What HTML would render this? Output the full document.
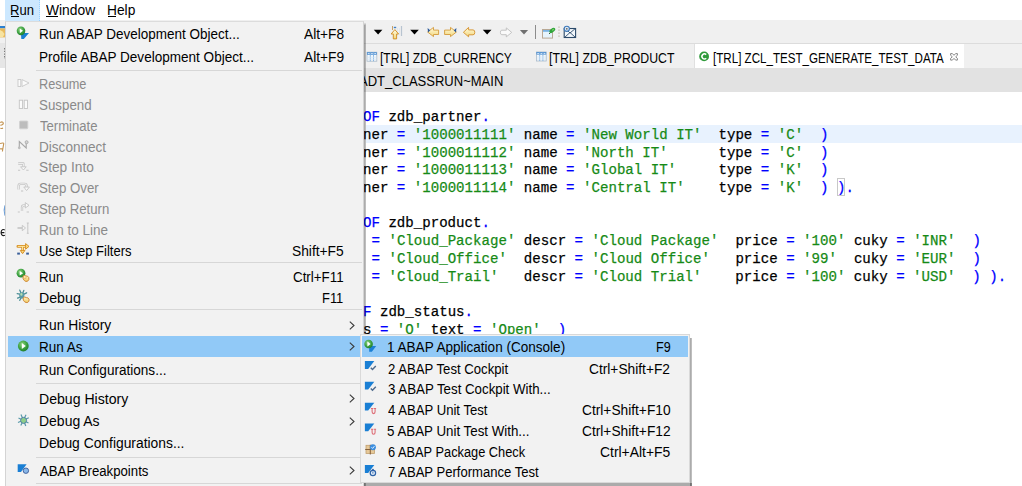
<!DOCTYPE html>
<html><head><meta charset="utf-8"><style>
html,body{margin:0;padding:0;}
body{width:1022px;height:486px;overflow:hidden;position:relative;background:#fff;font-family:'Liberation Sans',sans-serif;}
div{box-sizing:border-box;}
.code{position:absolute;font-family:"Liberation Mono",monospace;white-space:pre;color:#000;-webkit-text-stroke:0.25px currentColor;}
.k{color:#0000ff}.s{color:#168a16}
</style></head><body>
<div style="position:absolute;left:0px;top:0px;width:1022px;height:20px;background:#ffffff;"></div>
<div style="position:absolute;left:0px;top:20px;width:1022px;height:23px;background:#f0f0f0;"></div>
<div style="position:absolute;left:0px;top:43px;width:1022px;height:1px;background:#dcdcdc;"></div>
<div style="position:absolute;left:0px;top:44px;width:1022px;height:24px;background:#f0f0f0;"></div>
<div style="position:absolute;left:5px;top:68px;width:1017px;height:24px;background:#e2e2e2;"></div>
<div style="position:absolute;left:0px;top:43px;width:5px;height:25px;background:#e6e6e6;"></div>
<div style="position:absolute;left:694px;top:44px;width:270px;height:24px;background:#ffffff;border-left:1px solid #e0e0e0;"></div>
<div style="position:absolute;left:380.14px;top:48.95px;font-size:14.0px;line-height:18px;color:#000;white-space:pre;transform-origin:0 0;transform:scaleX(0.8605);">[TRL] ZDB_CURRENCY</div>
<div style="position:absolute;left:549.12px;top:48.95px;font-size:14.0px;line-height:18px;color:#000;white-space:pre;transform-origin:0 0;transform:scaleX(0.8761);">[TRL] ZDB_PRODUCT</div>
<div style="position:absolute;left:712.67px;top:48.95px;font-size:14.0px;line-height:18px;color:#000;white-space:pre;transform-origin:0 0;transform:scaleX(0.8284);">[TRL] ZCL_TEST_GENERATE_TEST_DATA</div>
<div style="position:absolute;left:359.00px;top:72.15px;font-size:14.0px;line-height:18px;color:#000;white-space:pre;transform-origin:0 0;transform:scaleX(0.9299);">ADT_CLASSRUN~MAIN</div>
<div style="position:absolute;left:366px;top:125.4px;width:656px;height:17.3px;background:#e8f2fe;"></div>
<div class="code" style="left:363.3px;top:109.22px;font-size:15.5px;line-height:17.7px;transform-origin:0 0;transform:scaleX(0.9097);"><span class="k">OF</span> zdb_partner<span class="k">.</span></div>
<div class="code" style="left:363.3px;top:126.92px;font-size:15.5px;line-height:17.7px;transform-origin:0 0;transform:scaleX(0.9097);">ner <span class="k">=</span> <span class="s">&#x27;1000011111&#x27;</span> name <span class="k">=</span> <span class="s">&#x27;New World IT&#x27;</span>  type <span class="k">=</span> <span class="s">&#x27;C&#x27;</span>  <span class="k">)</span></div>
<div class="code" style="left:363.3px;top:144.62px;font-size:15.5px;line-height:17.7px;transform-origin:0 0;transform:scaleX(0.9097);">ner <span class="k">=</span> <span class="s">&#x27;1000011112&#x27;</span> name <span class="k">=</span> <span class="s">&#x27;North IT&#x27;</span>      type <span class="k">=</span> <span class="s">&#x27;C&#x27;</span>  <span class="k">)</span></div>
<div class="code" style="left:363.3px;top:162.32px;font-size:15.5px;line-height:17.7px;transform-origin:0 0;transform:scaleX(0.9097);">ner <span class="k">=</span> <span class="s">&#x27;1000011113&#x27;</span> name <span class="k">=</span> <span class="s">&#x27;Global IT&#x27;</span>     type <span class="k">=</span> <span class="s">&#x27;K&#x27;</span>  <span class="k">)</span></div>
<div class="code" style="left:363.3px;top:180.02px;font-size:15.5px;line-height:17.7px;transform-origin:0 0;transform:scaleX(0.9097);">ner <span class="k">=</span> <span class="s">&#x27;1000011114&#x27;</span> name <span class="k">=</span> <span class="s">&#x27;Central IT&#x27;</span>    type <span class="k">=</span> <span class="s">&#x27;K&#x27;</span>  <span class="k">)</span> <span class="k">)</span><span class="k">.</span></div>
<div class="code" style="left:363.3px;top:215.42px;font-size:15.5px;line-height:17.7px;transform-origin:0 0;transform:scaleX(0.9097);"><span class="k">OF</span> zdb_product<span class="k">.</span></div>
<div class="code" style="left:363.3px;top:233.12px;font-size:15.5px;line-height:17.7px;transform-origin:0 0;transform:scaleX(0.9097);"> <span class="k">=</span> <span class="s">&#x27;Cloud_Package&#x27;</span> descr <span class="k">=</span> <span class="s">&#x27;Cloud Package&#x27;</span>  price <span class="k">=</span> <span class="s">&#x27;100&#x27;</span> cuky <span class="k">=</span> <span class="s">&#x27;INR&#x27;</span>  <span class="k">)</span></div>
<div class="code" style="left:363.3px;top:250.82px;font-size:15.5px;line-height:17.7px;transform-origin:0 0;transform:scaleX(0.9097);"> <span class="k">=</span> <span class="s">&#x27;Cloud_Office&#x27;</span>  descr <span class="k">=</span> <span class="s">&#x27;Cloud Office&#x27;</span>   price <span class="k">=</span> <span class="s">&#x27;99&#x27;</span>  cuky <span class="k">=</span> <span class="s">&#x27;EUR&#x27;</span>  <span class="k">)</span></div>
<div class="code" style="left:363.3px;top:268.52px;font-size:15.5px;line-height:17.7px;transform-origin:0 0;transform:scaleX(0.9097);"> <span class="k">=</span> <span class="s">&#x27;Cloud_Trail&#x27;</span>   descr <span class="k">=</span> <span class="s">&#x27;Cloud Trial&#x27;</span>    price <span class="k">=</span> <span class="s">&#x27;100&#x27;</span> cuky <span class="k">=</span> <span class="s">&#x27;USD&#x27;</span>  <span class="k">)</span> <span class="k">)</span><span class="k">.</span></div>
<div class="code" style="left:363.3px;top:303.92px;font-size:15.5px;line-height:17.7px;transform-origin:0 0;transform:scaleX(0.9097);"><span class="k">F</span> zdb_status<span class="k">.</span></div>
<div class="code" style="left:363.3px;top:321.62px;font-size:15.5px;line-height:17.7px;transform-origin:0 0;transform:scaleX(0.9097);">s <span class="k">=</span> <span class="s">&#x27;O&#x27;</span> text <span class="k">=</span> <span class="s">&#x27;Open&#x27;</span>  <span class="k">)</span></div>
<div style="position:absolute;left:836.6px;top:178.2px;width:8.4px;height:17.4px;background:transparent;border:1px solid #c8c8c8;"></div>
<div style="position:absolute;left:5px;top:0px;width:35px;height:20.5px;background:#cce8ff;border-right:1px dotted #99d1ff;"></div>
<div style="position:absolute;left:10.27px;top:1.25px;font-size:14.0px;line-height:18px;color:#000;white-space:pre;transform-origin:0 0;transform:scaleX(0.9333);">Run</div>
<div style="position:absolute;left:45.90px;top:1.25px;font-size:14.0px;line-height:18px;color:#000;white-space:pre;transform-origin:0 0;transform:scaleX(0.9860);">Window</div>
<div style="position:absolute;left:106.52px;top:1.25px;font-size:14.0px;line-height:18px;color:#000;white-space:pre;transform-origin:0 0;transform:scaleX(0.9821);">Help</div>
<div style="position:absolute;left:11px;top:16px;width:8px;height:1px;background:#000;"></div>
<div style="position:absolute;left:46px;top:16px;width:12px;height:1px;background:#000;"></div>
<div style="position:absolute;left:108px;top:16px;width:8px;height:1px;background:#000;"></div>
<svg style="position:absolute;left:0;top:0" width="1022" height="486" viewBox="0 0 1022 486">
<defs>
 <linearGradient id="yel" x1="0" y1="0" x2="0" y2="1"><stop offset="0" stop-color="#fffbe0"/><stop offset="1" stop-color="#f3d77a"/></linearGradient>
</defs>
<!-- left strip -->
<rect x="0" y="26" width="5" height="2.4" fill="#2a7fd0"/>
<path d="M0 28.4 H5 V37.4 H0 Z" fill="#e9b95a"/>
<path d="M0 30 Q3 31 4.5 34 L3 37 H0 Z" fill="#f7e3a0"/>

<path d="M4.6 48 V59" stroke="#777" stroke-width="1.1" stroke-dasharray="1.4 1.3"/>
<path d="M0.2 122.5 Q2.8 121 3.3 123.2 Q3.4 125 0.3 125.2 M0.4 128.3 Q1.8 128.8 3 128" fill="none" stroke="#c39350" stroke-width="1.1"/>
<path d="M3.8 143.2 L2.4 151.5 M0 143.6 Q2.4 142.6 3.8 143.2 M0 148.8 Q1.5 149 2.8 148.4" fill="none" stroke="#c39350" stroke-width="1.1"/>
<path d="M5 205.5 Q3.4 210.5 5 215.5" fill="none" stroke="#6f9fd6" stroke-width="1.3"/>
<path d="M4.8 230 Q3 228.8 1.6 230.5 Q0.6 232.5 1.6 234.6 Q3 236.2 4.9 235.2 M1.2 232.6 H4.4" fill="none" stroke="#1a1a1a" stroke-width="1.1"/>
<!-- dropdown arrows -->
<path d="M373.8 29.8 H382.4 L378.1 34.5 Z" fill="#000"/>
<path d="M410.2 29.8 H418.8 L414.5 34.5 Z" fill="#000"/>
<path d="M482.8 29.8 H491.5 L487.15 34.4 Z" fill="#000"/>
<path d="M519.9 30 H528.1 L524 34.5 Z" fill="#707070"/>
<!-- up arrow icon -->
<path d="M392.5 26 V30" stroke="#c9a36a" stroke-width="1"/>
<path d="M401.5 26 V36" stroke="#b8c4d0" stroke-width="1.2"/>
<rect x="393.8" y="26.8" width="2.4" height="1.4" fill="#3f7fc4"/>
<path d="M397.5 28.5 V36 M399.5 28.5 V35" stroke="#cfe0f0" stroke-width="1" stroke-dasharray="1 1"/>
<path d="M394.9 29.6 L398.6 34 H396.6 V38.9 H393.3 V34 H391.1 Z" fill="url(#yel)" stroke="#d08a20" stroke-width="0.9"/>
<!-- back arrow with blue -->
<path d="M427.6 32 L433.5 27.4 V30.1 H438.6 V34.5 H433.5 V36.6 Z" fill="url(#yel)" stroke="#d49a3a" stroke-width="0.9" stroke-linejoin="round"/>
<path d="M427.6 28 L430.2 30.2 L428 32.5 Z" fill="#2b5a9a"/>
<!-- forward arrow with blue -->
<path d="M456.4 32 L450.5 27.4 V30.1 H444.6 V34.5 H450.5 V36.6 Z" fill="url(#yel)" stroke="#d49a3a" stroke-width="0.9" stroke-linejoin="round"/>
<path d="M456.4 28 L453.8 30.2 L456 32.5 Z" fill="#2b5a9a"/>
<!-- orange back arrow -->
<path d="M463.4 32.3 L468.6 27.4 V29.9 H473 Q474.8 29.9 474.8 32.3 Q474.8 34.8 473 34.8 H468.6 V36.8 Z" fill="url(#yel)" stroke="#d8993a" stroke-width="1" stroke-linejoin="round"/>
<!-- disabled forward arrow -->
<path d="M511.7 32.4 L506.3 27.9 V30.2 H501.8 Q500.4 30.2 500.4 32.4 Q500.4 34.7 501.8 34.7 H506.3 V36.9 Z" fill="#fafafa" stroke="#bdbdbd" stroke-width="0.9" stroke-linejoin="round"/>
<!-- separator -->
<rect x="535" y="25" width="1" height="14" fill="#8c8c8c"/>
<!-- window + pin -->
<rect x="542.5" y="29.5" width="10" height="8.6" fill="#e6f4fc" stroke="#b8a894" stroke-width="1"/>
<rect x="543" y="30" width="9" height="1.8" fill="#7ab2e2"/>
<path d="M549 34 L551.5 31.5" stroke="#3a5a3a" stroke-width="1"/>
<ellipse cx="552.3" cy="30.4" rx="3.4" ry="1.9" transform="rotate(-40 552.3 30.4)" fill="#2fa53a"/><ellipse cx="553" cy="29.8" rx="1.2" ry="0.7" transform="rotate(-40 553 29.8)" fill="#7fd06a"/>
<!-- dotted -->
<path d="M559 26.5 V38" stroke="#bfb7a8" stroke-width="1.3" stroke-dasharray="1.3 1.7"/>
<!-- envelope -->
<rect x="564.2" y="28.5" width="11.4" height="9" fill="#f2f7fb" stroke="#2c4a6a" stroke-width="1.1"/>
<path d="M564.5 37.5 L570 32.5 L575.5 37.5 M566 29 L570 33 L575 28.8" fill="none" stroke="#2c4a6a" stroke-width="0.9"/>
<circle cx="566.8" cy="28.8" r="2.6" fill="#dfeaf5" stroke="#3d78b8" stroke-width="1.1"/>
<circle cx="566.8" cy="28.8" r="0.9" fill="#666"/>
<!-- tab icons -->
<g>
<rect x="367" y="52.2" width="9.8" height="9" fill="#f4f9fd" stroke="#a9b9c9" stroke-width="0.8"/>
<rect x="367" y="52.2" width="9.8" height="2.6" fill="#4f8fd0"/>
<path d="M370.3 52.5 V61.2 M373.5 52.5 V61.2" stroke="#7fb0e0" stroke-width="0.9"/>
<path d="M367.8 53.6 H369.6 M371.1 53.6 H372.8 M374.3 53.6 H376" stroke="#e8f3ff" stroke-width="0.9"/>
<path d="M367.5 57.2 H376.5 M367.5 59.2 H376.5" stroke="#d5e6f5" stroke-width="0.8"/>
</g>
<g transform="translate(169.4 -0.2)">
<rect x="367" y="52.2" width="9.8" height="9" fill="#f4f9fd" stroke="#a9b9c9" stroke-width="0.8"/>
<rect x="367" y="52.2" width="9.8" height="2.6" fill="#4f8fd0"/>
<path d="M370.3 52.5 V61.2 M373.5 52.5 V61.2" stroke="#7fb0e0" stroke-width="0.9"/>
<path d="M367.8 53.6 H369.6 M371.1 53.6 H372.8 M374.3 53.6 H376" stroke="#e8f3ff" stroke-width="0.9"/>
<path d="M367.5 57.2 H376.5 M367.5 59.2 H376.5" stroke="#d5e6f5" stroke-width="0.8"/>
</g>
<circle cx="704.1" cy="56.4" r="4.9" fill="#2f9a3a"/>
<path d="M706.2 54.6 A2.5 2.5 0 1 0 706.2 58.2" fill="none" stroke="#fff" stroke-width="1.5"/>
<path d="M950.6 53.6 L952.4 53.6 L954 55.3 L955.6 53.6 L957.4 53.6 L957.4 55.3 L955.7 56.8 L957.4 58.4 L957.4 60.1 L955.6 60.1 L954 58.4 L952.4 60.1 L950.6 60.1 L950.6 58.4 L952.3 56.8 L950.6 55.3 Z" fill="#fff" stroke="#7a7a7a" stroke-width="0.9" stroke-linejoin="round"/>
</svg>
<div style="position:absolute;left:364px;top:25px;width:2px;height:470px;background:linear-gradient(to right, rgba(0,0,0,0.36), rgba(0,0,0,0.22));"></div>
<div style="position:absolute;left:364px;top:23px;width:2px;height:2px;background:linear-gradient(to bottom, rgba(0,0,0,0.05), rgba(0,0,0,0.25));"></div>
<div style="position:absolute;left:5px;top:21px;width:359px;height:470px;background:#f2f2f2;border:1px solid #d4d4d4;border-top-color:#dcdcdc;border-bottom:none;"></div>
<div style="position:absolute;left:36px;top:70px;width:326px;height:1px;background:#d7d7d7;"></div>
<div style="position:absolute;left:36px;top:262px;width:326px;height:1px;background:#d7d7d7;"></div>
<div style="position:absolute;left:36px;top:309px;width:326px;height:1px;background:#d7d7d7;"></div>
<div style="position:absolute;left:36px;top:383px;width:326px;height:1px;background:#d7d7d7;"></div>
<div style="position:absolute;left:36px;top:457px;width:326px;height:1px;background:#d7d7d7;"></div>
<div style="position:absolute;left:36px;top:483px;width:326px;height:1px;background:#d7d7d7;"></div>
<div style="position:absolute;left:8px;top:336px;width:352px;height:21px;background:#91c9f7;"></div>
<div style="position:absolute;left:38.94px;top:25.35px;font-size:14.0px;line-height:18px;color:#000;white-space:pre;transform-origin:0 0;transform:scaleX(0.9633);">Run ABAP Development Object...</div>
<div style="position:absolute;left:304.00px;top:25.35px;font-size:14.0px;line-height:18px;color:#000;white-space:pre;transform-origin:0 0;transform:scaleX(0.9829);">Alt+F8</div>
<div style="position:absolute;left:38.93px;top:47.85px;font-size:14.0px;line-height:18px;color:#000;white-space:pre;transform-origin:0 0;transform:scaleX(0.9674);">Profile ABAP Development Object...</div>
<div style="position:absolute;left:304.00px;top:47.85px;font-size:14.0px;line-height:18px;color:#000;white-space:pre;transform-origin:0 0;transform:scaleX(0.9829);">Alt+F9</div>
<div style="position:absolute;left:38.99px;top:75.05px;font-size:14.0px;line-height:18px;color:#8a8a8a;white-space:pre;transform-origin:0 0;transform:scaleX(0.9098);">Resume</div>
<div style="position:absolute;left:38.95px;top:95.65px;font-size:14.0px;line-height:18px;color:#8a8a8a;white-space:pre;transform-origin:0 0;transform:scaleX(0.9519);">Suspend</div>
<div style="position:absolute;left:39.90px;top:116.75px;font-size:14.0px;line-height:18px;color:#8a8a8a;white-space:pre;transform-origin:0 0;transform:scaleX(0.9361);">Terminate</div>
<div style="position:absolute;left:38.93px;top:137.95px;font-size:14.0px;line-height:18px;color:#8a8a8a;white-space:pre;transform-origin:0 0;transform:scaleX(0.9691);">Disconnect</div>
<div style="position:absolute;left:38.92px;top:158.35px;font-size:14.0px;line-height:18px;color:#8a8a8a;white-space:pre;transform-origin:0 0;transform:scaleX(0.9782);">Step Into</div>
<div style="position:absolute;left:38.95px;top:178.65px;font-size:14.0px;line-height:18px;color:#8a8a8a;white-space:pre;transform-origin:0 0;transform:scaleX(0.9484);">Step Over</div>
<div style="position:absolute;left:38.96px;top:199.55px;font-size:14.0px;line-height:18px;color:#8a8a8a;white-space:pre;transform-origin:0 0;transform:scaleX(0.9411);">Step Return</div>
<div style="position:absolute;left:38.94px;top:220.95px;font-size:14.0px;line-height:18px;color:#8a8a8a;white-space:pre;transform-origin:0 0;transform:scaleX(0.9643);">Run to Line</div>
<div style="position:absolute;left:38.97px;top:241.75px;font-size:14.0px;line-height:18px;color:#000;white-space:pre;transform-origin:0 0;transform:scaleX(0.9286);">Use Step Filters</div>
<div style="position:absolute;left:292.22px;top:241.75px;font-size:14.0px;line-height:18px;color:#000;white-space:pre;transform-origin:0 0;transform:scaleX(0.9843);">Shift+F5</div>
<div style="position:absolute;left:38.95px;top:268.05px;font-size:14.0px;line-height:18px;color:#000;white-space:pre;transform-origin:0 0;transform:scaleX(0.9458);">Run</div>
<div style="position:absolute;left:292.80px;top:268.05px;font-size:14.0px;line-height:18px;color:#000;white-space:pre;transform-origin:0 0;transform:scaleX(0.9547);">Ctrl+F11</div>
<div style="position:absolute;left:38.89px;top:289.05px;font-size:14.0px;line-height:18px;color:#000;white-space:pre;transform-origin:0 0;transform:scaleX(1.0125);">Debug</div>
<div style="position:absolute;left:322.18px;top:289.05px;font-size:14.0px;line-height:18px;color:#000;white-space:pre;transform-origin:0 0;transform:scaleX(0.9227);">F11</div>
<div style="position:absolute;left:38.91px;top:315.95px;font-size:14.0px;line-height:18px;color:#000;white-space:pre;transform-origin:0 0;transform:scaleX(0.9875);">Run History</div>
<svg style="position:absolute;left:349px;top:320.5px" width="6" height="9" viewBox="0 0 6 9"><path d="M0.8 0.6 L5 4.5 L0.8 8.4" fill="none" stroke="#3a3a3a" stroke-width="1.1"/></svg>
<div style="position:absolute;left:38.94px;top:337.85px;font-size:14.0px;line-height:18px;color:#000;white-space:pre;transform-origin:0 0;transform:scaleX(0.9636);">Run As</div>
<svg style="position:absolute;left:349px;top:342.4px" width="6" height="9" viewBox="0 0 6 9"><path d="M0.8 0.6 L5 4.5 L0.8 8.4" fill="none" stroke="#3a3a3a" stroke-width="1.1"/></svg>
<div style="position:absolute;left:38.93px;top:360.55px;font-size:14.0px;line-height:18px;color:#000;white-space:pre;transform-origin:0 0;transform:scaleX(0.9692);">Run Configurations...</div>
<div style="position:absolute;left:38.89px;top:389.75px;font-size:14.0px;line-height:18px;color:#000;white-space:pre;transform-origin:0 0;transform:scaleX(1.0057);">Debug History</div>
<svg style="position:absolute;left:349px;top:394.3px" width="6" height="9" viewBox="0 0 6 9"><path d="M0.8 0.6 L5 4.5 L0.8 8.4" fill="none" stroke="#3a3a3a" stroke-width="1.1"/></svg>
<div style="position:absolute;left:38.90px;top:412.45px;font-size:14.0px;line-height:18px;color:#000;white-space:pre;transform-origin:0 0;transform:scaleX(0.9983);">Debug As</div>
<svg style="position:absolute;left:349px;top:417.0px" width="6" height="9" viewBox="0 0 6 9"><path d="M0.8 0.6 L5 4.5 L0.8 8.4" fill="none" stroke="#3a3a3a" stroke-width="1.1"/></svg>
<div style="position:absolute;left:38.91px;top:434.35px;font-size:14.0px;line-height:18px;color:#000;white-space:pre;transform-origin:0 0;transform:scaleX(0.9890);">Debug Configurations...</div>
<div style="position:absolute;left:39.90px;top:461.65px;font-size:14.0px;line-height:18px;color:#000;white-space:pre;transform-origin:0 0;transform:scaleX(0.9435);">ABAP Breakpoints</div>
<svg style="position:absolute;left:349px;top:466.2px" width="6" height="9" viewBox="0 0 6 9"><path d="M0.8 0.6 L5 4.5 L0.8 8.4" fill="none" stroke="#3a3a3a" stroke-width="1.1"/></svg>
<div style="position:absolute;left:690px;top:338px;width:2px;height:148px;background:linear-gradient(to right, rgba(0,0,0,0.36), rgba(0,0,0,0.22));"></div>
<div style="position:absolute;left:364px;top:483px;width:328px;height:3px;background:rgba(0,0,0,0.33);"></div>
<div style="position:absolute;left:360px;top:334px;width:330px;height:149px;background:#f2f2f2;border:1px solid #d9d9d9;"></div>
<div style="position:absolute;left:362px;top:336px;width:326px;height:20.5px;background:#91c9f7;"></div>
<div style="position:absolute;left:387.03px;top:337.85px;font-size:14.0px;line-height:18px;color:#000;white-space:pre;transform-origin:0 0;transform:scaleX(0.9672);">1 ABAP Application (Console)</div>
<div style="position:absolute;left:655.80px;top:337.85px;font-size:14.0px;line-height:18px;color:#000;white-space:pre;transform-origin:0 0;transform:scaleX(0.9000);">F9</div>
<div style="position:absolute;left:388.00px;top:359.65px;font-size:14.0px;line-height:18px;color:#000;white-space:pre;transform-origin:0 0;transform:scaleX(0.9391);">2 ABAP Test Cockpit</div>
<div style="position:absolute;left:589.30px;top:359.65px;font-size:14.0px;line-height:18px;color:#000;white-space:pre;transform-origin:0 0;transform:scaleX(0.9817);">Ctrl+Shift+F2</div>
<div style="position:absolute;left:388.00px;top:380.25px;font-size:14.0px;line-height:18px;color:#000;white-space:pre;transform-origin:0 0;transform:scaleX(0.9485);">3 ABAP Test Cockpit With...</div>
<div style="position:absolute;left:388.00px;top:401.15px;font-size:14.0px;line-height:18px;color:#000;white-space:pre;transform-origin:0 0;transform:scaleX(0.9377);">4 ABAP Unit Test</div>
<div style="position:absolute;left:581.90px;top:401.15px;font-size:14.0px;line-height:18px;color:#000;white-space:pre;transform-origin:0 0;transform:scaleX(0.9811);">Ctrl+Shift+F10</div>
<div style="position:absolute;left:387.05px;top:421.95px;font-size:14.0px;line-height:18px;color:#000;white-space:pre;transform-origin:0 0;transform:scaleX(0.9520);">5 ABAP Unit Test With...</div>
<div style="position:absolute;left:581.90px;top:421.95px;font-size:14.0px;line-height:18px;color:#000;white-space:pre;transform-origin:0 0;transform:scaleX(0.9811);">Ctrl+Shift+F12</div>
<div style="position:absolute;left:388.00px;top:442.75px;font-size:14.0px;line-height:18px;color:#000;white-space:pre;transform-origin:0 0;transform:scaleX(0.9147);">6 ABAP Package Check</div>
<div style="position:absolute;left:599.80px;top:442.75px;font-size:14.0px;line-height:18px;color:#000;white-space:pre;transform-origin:0 0;transform:scaleX(0.9915);">Ctrl+Alt+F5</div>
<div style="position:absolute;left:388.00px;top:463.05px;font-size:14.0px;line-height:18px;color:#000;white-space:pre;transform-origin:0 0;transform:scaleX(0.9340);">7 ABAP Performance Test</div>
<svg style="position:absolute;left:0;top:0" width="1022" height="486" viewBox="0 0 1022 486">
<defs>
 <radialGradient id="grn" cx="0.4" cy="0.35" r="0.7"><stop offset="0" stop-color="#8fd47f"/><stop offset="0.6" stop-color="#3aa040"/><stop offset="1" stop-color="#1f7a2a"/></radialGradient>
 <linearGradient id="yel2" x1="0" y1="0" x2="0" y2="1"><stop offset="0" stop-color="#fff6c8"/><stop offset="1" stop-color="#f0c860"/></linearGradient>
</defs>
<!-- Run ABAP dev object -->
<path d="M21 33 H29 L23.8 39 H21.3 Z" fill="#1a7fd4"/>
<circle cx="21" cy="30.85" r="4.3" fill="url(#grn)"/>
<path d="M19.8 28.5 V33.2 L23 30.85 Z" fill="#fff"/>
<!-- resume -->
<rect x="18" y="79.5" width="2.8" height="7" fill="#fbfbfb" stroke="#c8c8c8" stroke-width="0.9"/>
<path d="M22 79.6 L29 83 L22 86.5 Z" fill="#fbfbfb" stroke="#c8c8c8" stroke-width="0.9" stroke-linejoin="round"/>
<!-- suspend -->
<rect x="19.3" y="100.2" width="3.3" height="8.3" fill="#fbfbfb" stroke="#c4c4c4" stroke-width="0.9"/>
<rect x="24.2" y="100.2" width="3.3" height="8.3" fill="#fbfbfb" stroke="#c4c4c4" stroke-width="0.9"/>
<!-- terminate -->
<rect x="19.5" y="121" width="8.3" height="7.8" fill="#bdbdbd" stroke="#d2d2d2" stroke-width="0.9" rx="0.8"/>
<!-- disconnect -->
<path d="M19.3 147.5 V141.5 L26.2 148 V142.5" fill="none" stroke="#a6a6a6" stroke-width="1.1"/>
<circle cx="19.3" cy="147.8" r="1.4" fill="#bdbdbd"/>
<circle cx="26.6" cy="142.2" r="1.5" fill="#d5d5d5" stroke="#a6a6a6" stroke-width="0.8"/>
<!-- step into -->
<path d="M18.2 163.5 H23.4 V167.5" fill="none" stroke="#c4c4c4" stroke-width="2.3" stroke-linejoin="round"/>
<path d="M18.2 163.5 H23.4 V167.5" fill="none" stroke="#fafafa" stroke-width="0.8"/>
<path d="M20.6 166.8 H26.2 L23.4 170 Z" fill="#fafafa" stroke="#c4c4c4" stroke-width="0.9" stroke-linejoin="round"/>
<path d="M18 170.2 H20.2 M26.2 170.2 H28.6" stroke="#c6c6c6" stroke-width="1.1"/>
<!-- step over -->
<path d="M18.6 189.5 V185.6 Q18.6 183.8 20.6 183.8 H24.6 Q26.6 183.8 26.6 185.8 V187.5" fill="none" stroke="#c4c4c4" stroke-width="2.3"/>
<path d="M18.6 189.5 V185.6 Q18.6 183.8 20.6 183.8 H24.6 Q26.6 183.8 26.6 185.8 V187.5" fill="none" stroke="#fafafa" stroke-width="0.8"/>
<path d="M23.8 187 H29.4 L26.6 190.6 Z" fill="#fafafa" stroke="#c4c4c4" stroke-width="0.9" stroke-linejoin="round"/>
<path d="M21 191 H23.2" stroke="#c6c6c6" stroke-width="1.1"/>
<!-- step return -->
<path d="M22 211 V207.3 Q22 205.3 24 205.3 H25.5" fill="none" stroke="#c4c4c4" stroke-width="2.3"/>
<path d="M22 211 V207.3 Q22 205.3 24 205.3 H25.5" fill="none" stroke="#fafafa" stroke-width="0.8"/>
<path d="M25.3 202.6 L29 205.3 L25.3 208 Z" fill="#fafafa" stroke="#c4c4c4" stroke-width="0.9" stroke-linejoin="round"/>
<path d="M17.8 212 H19.8 M26.6 212 H29" stroke="#c6c6c6" stroke-width="1.1"/>
<!-- run to line -->
<path d="M17.5 228 H22.5" stroke="#c4c4c4" stroke-width="1.6"/>
<path d="M22.3 225.3 L25.5 228 L22.3 230.7 Z" fill="#f4f4f4" stroke="#c4c4c4" stroke-width="0.9"/>
<path d="M27.8 223 V233.3 M26.8 223 H28.8 M26.8 233.3 H28.8" stroke="#c4c4c4" stroke-width="0.9"/>
<!-- use step filters -->
<path d="M17.8 246.4 H26 M22.6 246.4 V252" fill="none" stroke="#d89228" stroke-width="2.6" stroke-linecap="round"/>
<path d="M17.8 246.4 H26 M22.6 246.4 V252" fill="none" stroke="#ffe9a0" stroke-width="1"/>
<path d="M25.6 243.6 L29 246.4 L25.6 249.2 Z" fill="#f8d880" stroke="#d89228" stroke-width="1"/>
<path d="M20.2 250.4 L22.6 253.6 L25 250.4 Z" fill="#f8d880" stroke="#d89228" stroke-width="1"/>
<rect x="17.2" y="252.6" width="2.7" height="2" fill="#3a5f9a"/>
<rect x="26.2" y="252.6" width="2.7" height="2" fill="#3a5f9a"/>
<!-- run -->
<circle cx="21" cy="273.2" r="4.4" fill="url(#grn)"/>
<path d="M19.7 270.9 V275.5 L23.1 273.2 Z" fill="#fff"/>
<path d="M23 276.2 Q24.5 274.8 26 276 Q27.6 275.5 28.8 277.6 Q29.4 279.8 27.6 281.2 Q25.8 282 24.4 280.6 Q22.6 279.3 23 276.2 Z" fill="url(#yel2)" stroke="#d08a3a" stroke-width="1"/>
<path d="M24.5 278.5 L26.5 277.8" stroke="#e0a040" stroke-width="0.8"/>
<!-- debug -->
<path d="M17.2 293.6 L22 294.6 M17.6 298.2 L21.5 296.6 M19.8 290.2 L21 293 M23.8 290.4 L22.8 293 M26.6 292.8 L23.5 294.3 M19.8 300.3 L21.2 297.6" stroke="#4c8f96" stroke-width="1.3" stroke-linecap="round"/>
<ellipse cx="21.8" cy="295.4" rx="2.6" ry="3.1" fill="#5a9aa6"/>
<ellipse cx="21.4" cy="294.4" rx="1.1" ry="1.3" fill="#b5e0b0"/>
<path d="M23.2 297.8 Q24.8 296.3 26.3 297.6 Q28 297.2 29 299.3 Q29.5 301.4 27.8 302.4 Q26 303 24.6 301.8 Q22.8 300.6 23.2 297.8 Z" fill="url(#yel2)" stroke="#d08a3a" stroke-width="1"/>
<!-- run as -->
<circle cx="23.3" cy="346" r="5.4" fill="url(#grn)"/>
<path d="M21.8 343 V349 L25.8 346 Z" fill="#fff"/>
<!-- debug as -->
<path d="M18.5 418 L28.5 423 M18 422.5 L28.8 417.8 M21 414.5 L25.8 426 M26 414.8 L20.8 425.5" stroke="#5a9aaa" stroke-width="1.2"/>
<circle cx="23.6" cy="420.4" r="3" fill="#8fcf8a" stroke="#4a78a8" stroke-width="0.9"/>
<!-- abap breakpoints -->
<path d="M17.7 464.3 H26.6 L21 471.9 H17.7 Z" fill="#1a7fd4"/>
<circle cx="25.9" cy="470.7" r="2.7" fill="#8ab8e8" stroke="#3a5a9a" stroke-width="0.9"/>
<!-- submenu icons -->
<path d="M369.2 346 H376.2 L371.9 351.8 H369.2 Z" fill="#1a7fd4"/>
<circle cx="368.6" cy="344" r="4.3" fill="url(#grn)"/>
<path d="M367.4 341.6 V346.4 L370.6 344 Z" fill="#fff"/>
<g><path d="M364.9 361.1 H374.3 L368.2 368.9 H364.9 Z" fill="#1a7fd4"/></g>
<path d="M370.8 367.7 L372.5 369.5 L375.8 366" fill="none" stroke="#4d6a8c" stroke-width="1.4"/>
<g transform="translate(0 20.7)"><path d="M364.9 361.1 H374.3 L368.2 368.9 H364.9 Z" fill="#1a7fd4"/></g>
<path d="M370.8 388.4 L372.5 390.2 L375.8 386.7" fill="none" stroke="#4d6a8c" stroke-width="1.4"/>
<g transform="translate(0 41.6)"><path d="M364.9 361.1 H374.3 L368.2 368.9 H364.9 Z" fill="#1a7fd4"/></g>
<path d="M370.9 408.5 H373.3 M373.9 408.5 H376.1 M372.1 408.5 V411.6 Q372.1 413.6 373.6 413.6 Q375.1 413.6 375.1 411.6 V408.5" fill="none" stroke="#de6f78" stroke-width="1.1"/>
<g transform="translate(0 62.3)"><path d="M364.9 361.1 H374.3 L368.2 368.9 H364.9 Z" fill="#1a7fd4"/></g>
<path d="M370.9 429.2 H373.3 M373.9 429.2 H376.1 M372.1 429.2 V432.3 Q372.1 434.3 373.6 434.3 Q375.1 434.3 375.1 432.3 V429.2" fill="none" stroke="#de6f78" stroke-width="1.1"/>
<rect x="366" y="445.3" width="8.4" height="8.2" fill="#e6c898" stroke="#c0a070" stroke-width="0.8"/>
<path d="M370.3 444.8 V454.5 M365.2 449.5 H375" stroke="#7a5530" stroke-width="0.9"/>
<circle cx="372.9" cy="447.2" r="3" fill="#3d8fe0"/>
<path d="M371.5 447.3 L372.6 448.4 L374.4 446.2" fill="none" stroke="#fff" stroke-width="0.9"/>
<g transform="translate(0 104)"><path d="M364.9 361.1 H374.3 L368.2 368.9 H364.9 Z" fill="#1a7fd4"/></g>
<circle cx="372.9" cy="473" r="2.7" fill="#e4eef8" stroke="#2d62a8" stroke-width="1.2"/>
<path d="M372.9 471.6 V473.6 M371.9 469.4 H373.9 M372.9 469.4 V470.5" stroke="#2d62a8" stroke-width="0.9"/>
</svg>
</body></html>
